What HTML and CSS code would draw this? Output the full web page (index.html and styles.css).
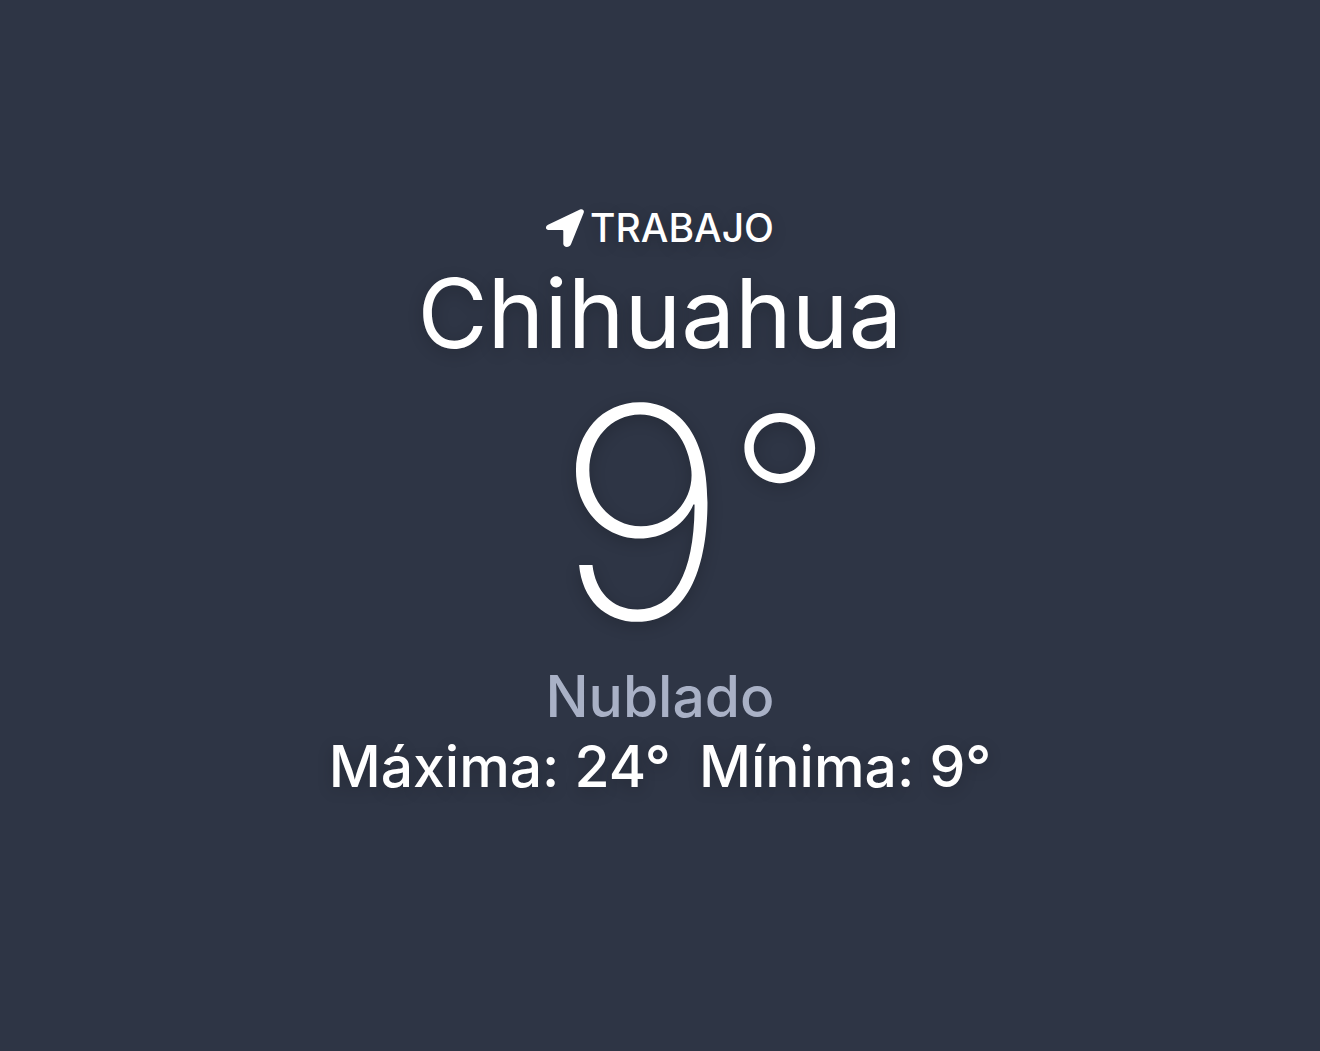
FILE: index.html
```html
<!DOCTYPE html>
<html lang="es">
<head>
  <meta charset="UTF-8">
  <meta name="viewport" content="width=device-width, initial-scale=1.0">
  <title>Clima - Chihuahua</title>
  <link rel="stylesheet" href="styles.css">
</head>
<body>
  <main class="clima">
    <p class="etiqueta">
      <svg class="flecha" viewBox="0 0 38 38" aria-hidden="true">
        <path d="M2 15.800 34 .5C36.500-.6 38.600 1.200 37.700 3.700L25 35.300C23.300 39.200 17.300 38.700 17.300 34.800V22Q17.300 21 16.300 21H3.200C-.7 21-1.200 17.300 2 15.800Z"/>
      </svg>
      <span>TRABAJO</span>
    </p>
    <h1 class="ciudad">Chihuahua</h1>
    <p class="temperatura"><span>9</span><span class="grado">°</span></p>
    <p class="condicion">Nublado</p>
    <p class="rango"><span>Máxima: 24°</span><span>Mínima: 9°</span></p>
  </main>
</body>
</html>
```

FILE: styles.css
```css
* {
  box-sizing: border-box;
}
body {
  margin: 0;
  min-height: 100vh;
  background: #2e3545;
  color: #fff;
  font-family: Inter, "Liberation Sans", sans-serif;
  text-shadow: 0 4px 16px rgba(0, 0, 0, 0.2);
}
.clima {
  display: flex;
  flex-direction: column;
  align-items: center;
  padding: 204px 20px 40px;
}
p, h1 {
  margin: 0;
}
.etiqueta {
  display: flex;
  align-items: center;
  gap: 6px;
  font-size: 39px;
  font-weight: 500;
  line-height: 48px;
}
.flecha {
  width: 38px;
  height: 38px;
  fill: #fff;
}
.ciudad {
  font-size: 96px;
  font-weight: 400;
  line-height: 122px;
}
.temperatura {
  display: flex;
  align-items: flex-start;
  padding-left: 68px;
  font-size: 294px;
  font-weight: 200;
  line-height: 276px;
}
.grado {
  font-size: 230px;
  line-height: 248px;
}
.condicion {
  margin-top: 12px;
  color: #a9b1c6;
  font-size: 57px;
  font-weight: 500;
  line-height: 70px;
  text-shadow: none;
}
.rango {
  display: flex;
  flex-wrap: wrap;
  justify-content: center;
  gap: 0 28px;
  font-size: 57px;
  font-weight: 500;
  line-height: 70px;
}
```
